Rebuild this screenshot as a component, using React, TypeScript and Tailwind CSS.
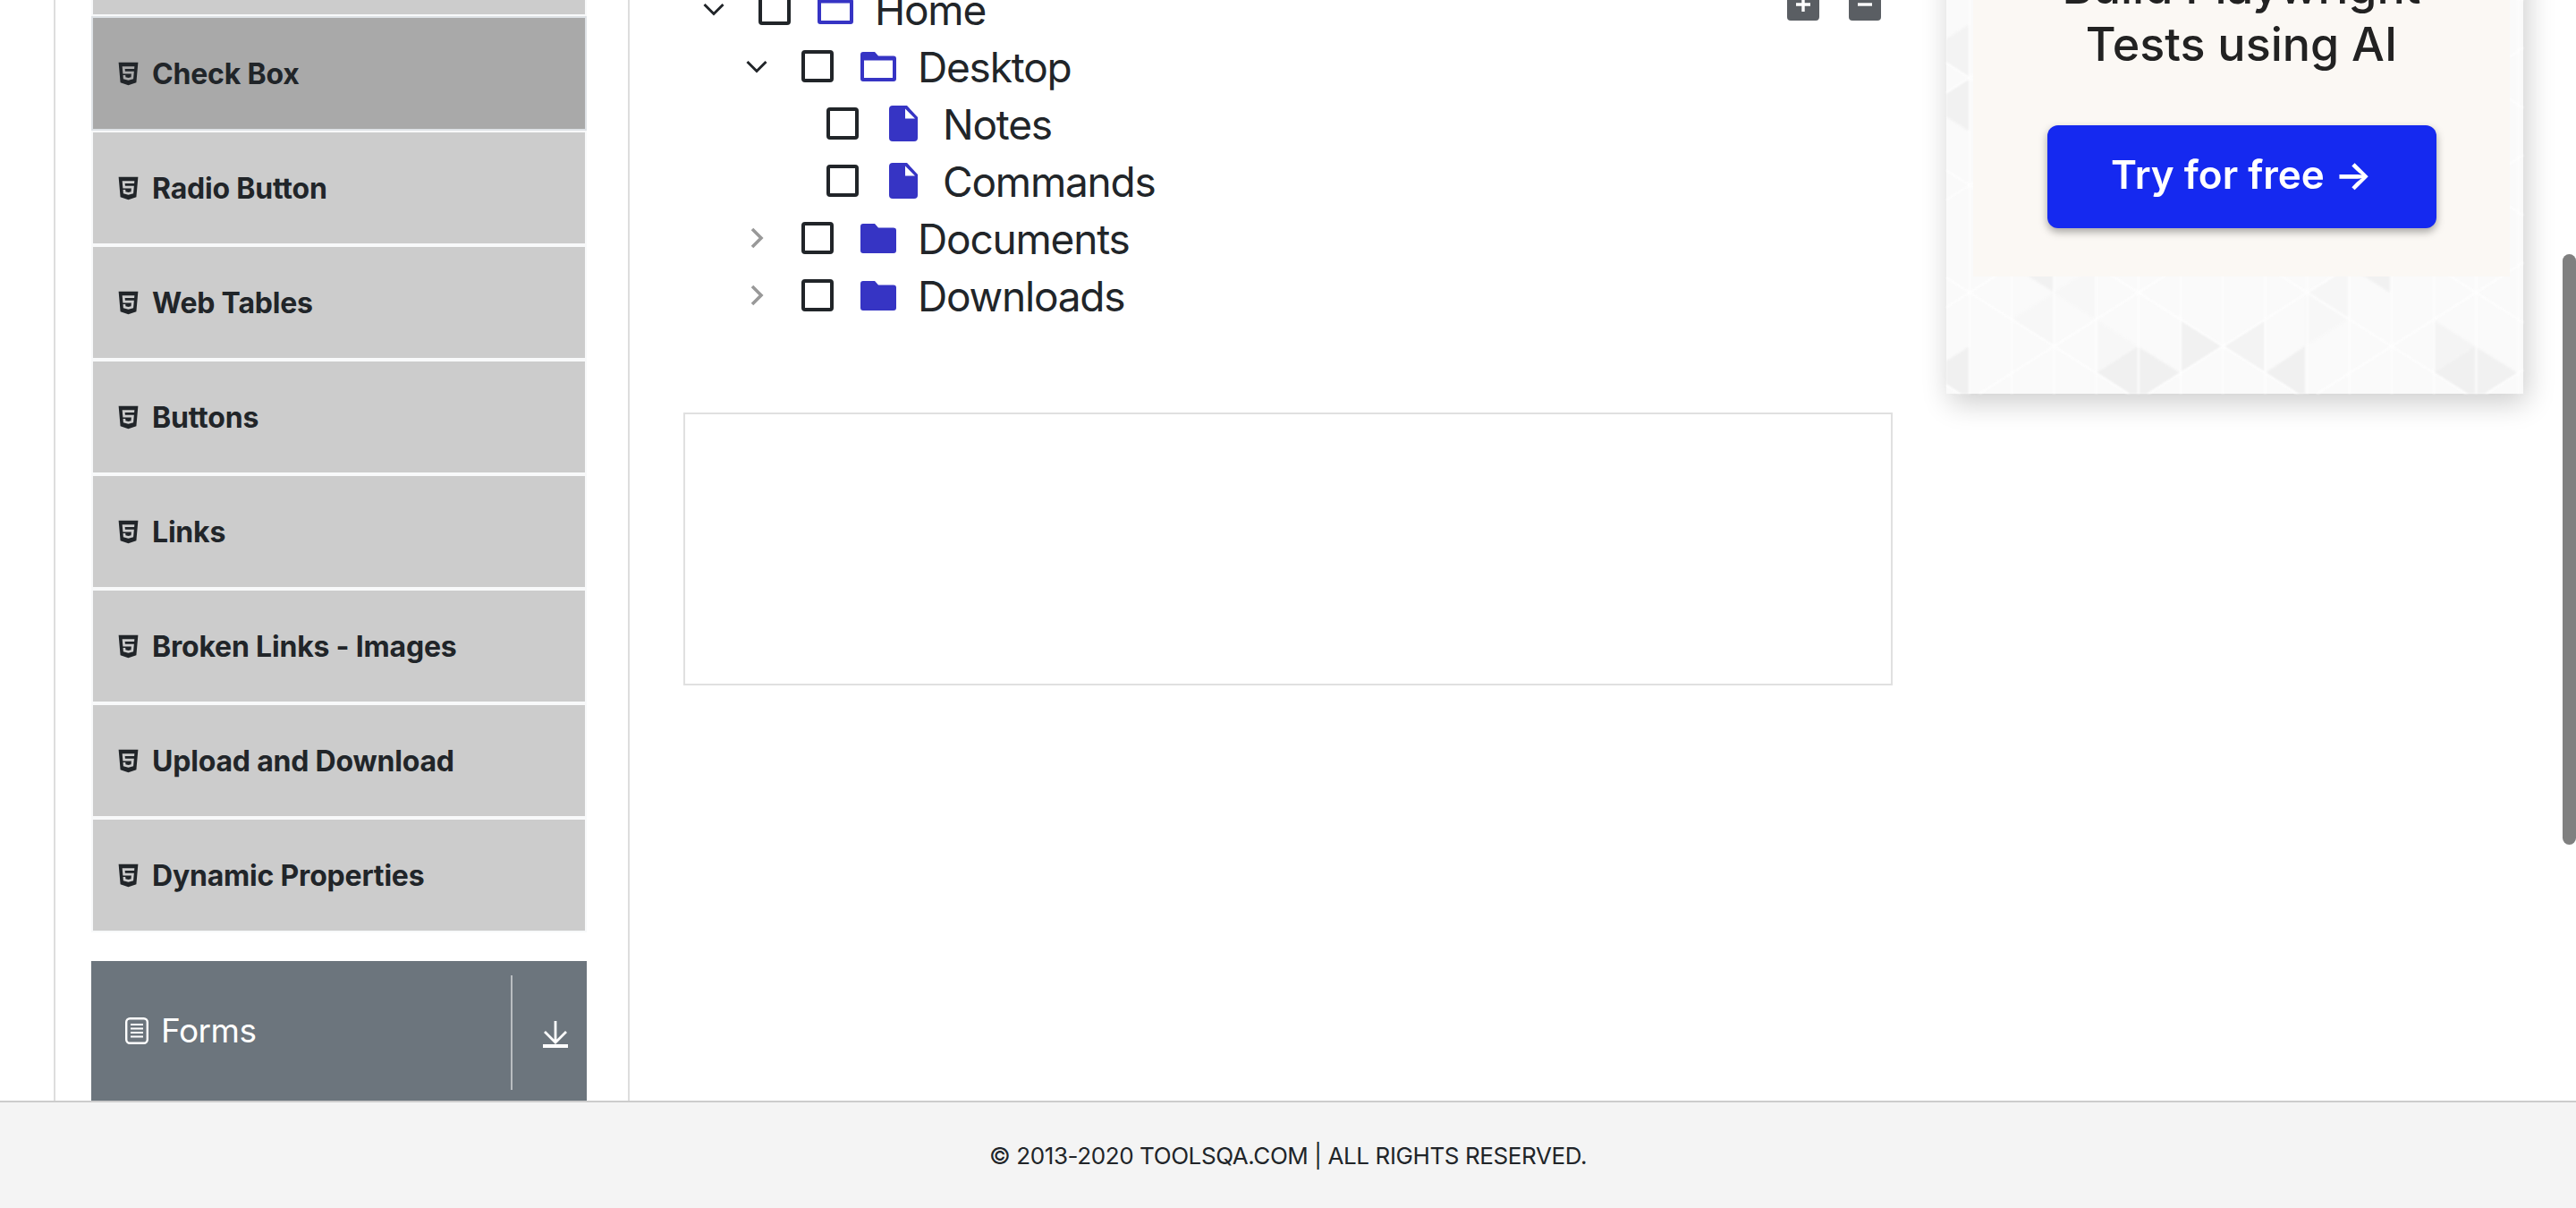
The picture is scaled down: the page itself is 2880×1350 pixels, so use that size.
import { FaHtml5 } from "react-icons/fa";

const menuItems = [
  "Text Box",
  "Check Box",
  "Radio Button",
  "Web Tables",
  "Buttons",
  "Links",
  "Broken Links - Images",
  "Upload and Download",
  "Dynamic Properties",
];

// the ad background, page coordinates: [base x, base top y, apex x, fill]
const adTriangles: [number, number, number, string][] = [
  [2390, 387, 2343, "#f0f0f0"],
  [2390, 387, 2438, "#f0f0f0"],
  [2438, 357, 2485, "#f1f1f1"],
  [2202, 387, 2155, "#f0f0f0"],
  [2297, 267, 2249, "#f1f1f1"],
  [2532, 357, 2485, "#f3f3f3"],
  [2577, 387, 2532, "#f0f0f0"],
  [2767, 387, 2720, "#f0f0f0"],
  [2767, 387, 2815, "#f1f1f1"],
  [2672, 267, 2625, "#f1f1f1"],
  [2720, 357, 2767, "#f4f4f4"],
  [2202, 87, 2155, "#f1f1f1"],
  [2202, 27, 2155, "#f3f3f3"],
  [2297, 327, 2249, "#f7f7f7"],
  [2343, 297, 2296, "#f7f7f7"],
  [2343, 357, 2390, "#f7f7f7"],
  [2625, 297, 2577, "#f6f6f6"],
  [2577, 327, 2625, "#f7f7f7"],
];

const latticeColumns = Array.from({ length: 15 }, (_, i) => 26 + 47.2 * i);
const latticeRows = Array.from({ length: 16 }, (_, i) => -360 + 120 * i);

function FolderIcon({ open }: { open?: boolean }) {
  return (
    <svg viewBox="0 0 40 33" className="w-[40px] h-[33px]">
      <path
        fillRule="evenodd"
        fill="#3634c4"
        d={
          open
            ? "M3 0h13l4 4.500h17a3 3 0 0 1 3 3V30a3 3 0 0 1-3 3H3a3 3 0 0 1-3-3V3a3 3 0 0 1 3-3ZM4 9.500V29h32V9.500Z"
            : "M3 0h13l4 4.500h17a3 3 0 0 1 3 3V30a3 3 0 0 1-3 3H3a3 3 0 0 1-3-3V3a3 3 0 0 1 3-3Z"
        }
      />
    </svg>
  );
}

function FileIcon() {
  return (
    <svg viewBox="0 0 32 40" className="w-[32px] h-[40px]">
      <path d="M4 0h16l12 13v23a4 4 0 0 1-4 4H4a4 4 0 0 1-4-4V4a4 4 0 0 1 4-4Z" fill="#3634c4" />
      <path d="M18 3.500v11h11Z" fill="#fff" />
    </svg>
  );
}

function Check() {
  return <div className="w-[36px] h-[36px] shrink-0 border-[4px] border-[#212529] rounded-[4px]" />;
}

function FolderRow({ label, indent, state }: { label: string; indent: string; state: "root" | "open" | "closed" }) {
  return (
    <div className={`h-[64px] flex items-center ${indent}`}>
      <div className="w-[84px] shrink-0">
        {state === "closed" ? (
          <svg viewBox="0 0 15 24" className="ml-[27px] w-[15px] h-[24px]" fill="none" stroke="#999999" strokeWidth="3.600">
            <path d="M2 2l10 10L2 22" />
          </svg>
        ) : (
          <svg viewBox="0 0 24 15" className="ml-[22px] w-[24px] h-[15px]" fill="none" stroke="#212529" strokeWidth="3">
            <path d="M1.500 2l10.500 10.500L22.500 2" />
          </svg>
        )}
      </div>
      <Check />
      <div className="ml-[30px] shrink-0">
        <FolderIcon open={state !== "closed"} />
      </div>
      <span className="ml-[24px] mt-[2px] text-[46px] leading-[64px] tracking-[-1.2px] text-[#212529]">{label}</span>
    </div>
  );
}

function FileRow({ label }: { label: string }) {
  return (
    <div className="h-[64px] flex items-center pl-[160px]">
      <Check />
      <div className="ml-[34px] shrink-0">
        <FileIcon />
      </div>
      <span className="ml-[28px] mt-[2px] text-[46px] leading-[64px] tracking-[-1.2px] text-[#212529]">{label}</span>
    </div>
  );
}

function ToolButton({ minus }: { minus?: boolean }) {
  return (
    <div className="w-[36px] h-[36px] rounded-[4px] bg-[#5a5e63] flex items-center justify-center">
      <svg viewBox="0 0 20 20" className="w-[20px] h-[20px]">
        <path d={minus ? "M2 10h16" : "M10 2v16M2 10h16"} stroke="#fff" strokeWidth="3.400" />
      </svg>
    </div>
  );
}

export default function App() {
  return (
    <div className="w-[2880px] h-[1350px] flex flex-col overflow-hidden relative bg-white font-['Inter',sans-serif]">
      <div className="flex-1 min-h-0 flex overflow-hidden">
        {/* sidebar */}
        <div className="ml-[60px] w-[644px] shrink-0 border-x-2 border-[#dddddd] pl-[40px] pr-[46px]">
          <div className="mt-[-110px]">
            {menuItems.map((item) => (
              <div
                key={item}
                className={
                  item === "Check Box"
                    ? "h-[128px] border-[2px] border-[#dee2e6] bg-[#a9a9a9] flex items-center pl-[25px] text-[32px] font-bold tracking-[-0.2px] text-[#212529]"
                    : "h-[128px] border-[2px] border-[#f8f9fa] bg-[#cccccc] flex items-center pl-[25px] text-[32px] font-bold tracking-[-0.2px] text-[#212529]"
                }
              >
                <FaHtml5 size={29} className="mr-[12px] shrink-0" />
                <span className="mt-[2px]">{item}</span>
              </div>
            ))}
          </div>
          <div className="mt-[32px] h-[176px] bg-[#6c757d] flex pt-[16px] pb-[32px] text-white">
            <div className="flex-1 flex items-center pl-[38px] pb-[8px]">
              <svg viewBox="0 0 26 30" className="w-[26px] h-[30px] mt-[4px]" fill="none" stroke="#fff" strokeWidth="2.400">
                <rect x="1.200" y="1.200" width="23.600" height="27.600" rx="4" />
                <path d="M6 8h14M6 12.500h14M6 17h14M6 21.500h14" strokeWidth="1.800" />
              </svg>
              <span className="ml-[14px] mt-[3px] text-[37px] leading-none tracking-[-0.5px]">Forms</span>
            </div>
            <div className="w-[2px] bg-[#b9bdc1]" />
            <div className="w-[83px] flex items-center justify-center pl-[12px] pt-[4px]">
              <svg viewBox="0 0 28 30" className="w-[28px] h-[30px]" fill="none" stroke="#fff">
                <path d="M14 0v24M2 12l12 12 12-12" strokeWidth="2.800" />
                <path d="M0 28h28" strokeWidth="4" />
              </svg>
            </div>
          </div>
        </div>

        {/* tree + output */}
        <div className="ml-[60px] w-[1352px] shrink-0">
          <div className="mt-[-22px] relative">
            <FolderRow label="Home" indent="pl-0" state="root" />
            <FolderRow label="Desktop" indent="pl-[48px]" state="open" />
            <FileRow label="Notes" />
            <FileRow label="Commands" />
            <FolderRow label="Documents" indent="pl-[48px]" state="closed" />
            <FolderRow label="Downloads" indent="pl-[48px]" state="closed" />
            <div className="absolute right-[13px] top-[9px] flex gap-[33px]">
              <ToolButton />
              <ToolButton minus />
            </div>
          </div>
          <div className="mt-[99px] h-[305px] border-2 border-[#e0e0e0]" />
        </div>

        {/* ad */}
        <div className="ml-[60px] w-[645px] shrink-0">
          <div className="mt-[-160px] h-[600px] relative bg-[#fafafa] shadow-[4px_10px_30px_rgba(0,0,0,0.2)] pl-[30px] pr-[15px]">
            <svg viewBox="0 0 645 600" className="absolute inset-0 w-[645px] h-[600px] blur-[1px]">
              {adTriangles.map(([baseX, top, apexX, fill]) => (
                <polygon
                  key={`${baseX}-${top}-${apexX}`}
                  points={`${baseX - 2176},${top + 160} ${baseX - 2176},${top + 220} ${apexX - 2176},${top + 190}`}
                  fill={fill}
                />
              ))}
              {latticeColumns.map((x) => (
                <path key={x} d={`M${x} 0v600`} stroke="#fefefe" strokeWidth="2" />
              ))}
              {latticeRows.map((y) => (
                <g key={y} stroke="#fefefe" strokeWidth="2">
                  <path d={`M26 ${y + 127}l708 450`} />
                  <path d={`M26 ${y + 127}l-708 -450`} />
                  <path d={`M26 ${y + 127}l708 -450`} />
                  <path d={`M26 ${y + 127}l-708 450`} />
                </g>
              ))}
            </svg>
            <div className="relative h-[469px] bg-[#fbf8f4] flex flex-col items-center justify-end pb-[54px] blur-[0.5px]">
              <div className="text-[52px] leading-[64px] font-medium text-[#222222] text-center mb-[58px]">
                Build Playwright
                <br />
                Tests using AI
              </div>
              <div className="w-[435px] h-[115px] pb-[6px] rounded-[12px] bg-[#1529f0] shadow-[0_4px_10px_rgba(0,0,0,0.35)] flex items-center justify-center text-[44px] font-semibold text-white">
                Try for free →
              </div>
            </div>
          </div>
        </div>
      </div>

      <div className="h-[120px] shrink-0 border-t-2 border-[#cccccc] bg-[#f4f4f4] flex items-center justify-center text-[26px] tracking-[-0.4px] text-[#212529]">
        © 2013-2020 TOOLSQA.COM | ALL RIGHTS RESERVED.
      </div>

      {/* page scrollbar */}
      <div className="absolute right-0 top-[284px] w-[15px] h-[660px] rounded-full bg-[#808080]" />
    </div>
  );
}
